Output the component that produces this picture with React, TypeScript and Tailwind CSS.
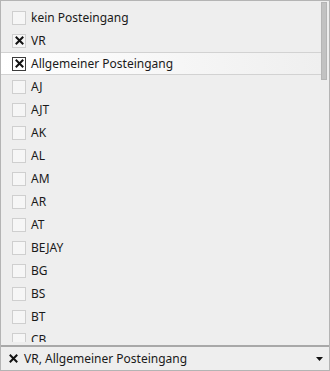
import React from "react";

const items: { label: string; checked?: boolean; active?: boolean }[] = [
  { label: "kein Posteingang" },
  { label: "VR", checked: true },
  { label: "Allgemeiner Posteingang", checked: true, active: true },
  { label: "AJ" },
  { label: "AJT" },
  { label: "AK" },
  { label: "AL" },
  { label: "AM" },
  { label: "AR" },
  { label: "AT" },
  { label: "BEJAY" },
  { label: "BG" },
  { label: "BS" },
  { label: "BT" },
  { label: "CB" },
  { label: "CD" },
];

const Cross = () => (
  <svg width="9" height="9" viewBox="0 0 9 9" className="shrink-0">
    <path d="M1.5 1.5L7.5 7.5M7.5 1.5L1.5 7.5" stroke="#111" strokeWidth="2" strokeLinecap="square" />
  </svg>
);

const Box = ({ checked, active }: { checked?: boolean; active?: boolean }) => (
  <div
    className={`w-[14px] h-[14px] shrink-0 flex items-center justify-center border ${
      active ? "border-[#3c3c3c] bg-white" : "border-[#cfcfcf] bg-[#f6f6f6]"
    }`}
  >
    {checked && <Cross />}
  </div>
);

export default function App() {
  return (
    <div
      className="w-[330px] h-[371px] flex flex-col bg-[#eeeeee] border border-[#b4b4b4] text-[12px] text-[#1a1a1a]"
      style={{ fontFamily: '"Noto Sans", "Open Sans", sans-serif' }}
    >
      {/* list */}
      <div className="flex-1 min-h-0 flex mb-[3px]">
        <div className="flex-1 min-w-0 pt-[5px] flex flex-col overflow-hidden">
          {items.map((it) => (
            <div
              key={it.label}
              className={`h-[23px] shrink-0 flex items-center gap-[5px] pl-[11px] ${
                it.active
                  ? "bg-gradient-to-r from-white to-[#efefef] border-y border-[#d2d2d2]"
                  : ""
              }`}
            >
              <Box checked={it.checked} active={it.active} />
              <span className="leading-[16px]">{it.label}</span>
            </div>
          ))}
        </div>
        <div className="w-[8px] shrink-0 pt-[1px] pr-[1px]">
          <div className="w-[6px] h-[78px] bg-[#c2c2c2] border border-[#b5b5b5]" />
        </div>
      </div>

      {/* selected summary */}
      <div className="h-[25px] shrink-0 border-t-2 border-[#a8a8a8] flex items-center gap-[6px] pl-[8px] pr-[6px]">
        <Cross />
        <span className="flex-1 leading-[16px] whitespace-nowrap">VR, Allgemeiner Posteingang</span>
        <svg width="7" height="4" viewBox="0 0 7 4" className="shrink-0">
          <path d="M0 0H7L3.5 4Z" fill="#111" />
        </svg>
      </div>
    </div>
  );
}
